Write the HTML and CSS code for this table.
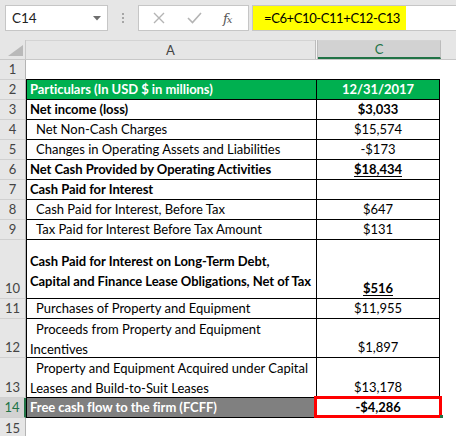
FILE: index.html
```html
<!DOCTYPE html>
<html>
<head>
<meta charset="utf-8">
<link rel="stylesheet" href="styles.css">
</head>
<body>
<div class="app">
  <div class="fbar">
    <div class="namebox">
      <span class="nb-text">C14</span>
      <svg class="caret" width="8" height="5" viewBox="0 0 8 5"><path d="M0 0 H8 L4 4.5 Z" fill="#6e6e6e"/></svg>
    </div>
    <div class="grip"><i></i><i></i><i></i></div>
    <div class="fxbox">
      <svg class="ico" width="12" height="12" viewBox="0 0 12 12"><path d="M1 1 L11 11 M11 1 L1 11" stroke="#b4b4b4" stroke-width="1.4" fill="none"/></svg>
      <svg class="ico" width="15" height="12" viewBox="0 0 15 12"><path d="M1 6 L5.5 10.5 L14 1" stroke="#b4b4b4" stroke-width="1.6" fill="none"/></svg>
      <span class="fx"><span class="fx-f">f</span><span class="fx-x">x</span></span>
    </div>
    <div class="formula"><span class="hl">=C6+C10-C11+C12-C13</span></div>
  </div>

  <div class="colhead">
    <div class="corner"><svg width="15" height="11" viewBox="0 0 15 11"><path d="M15 0 V11 H0 Z" fill="#b9b9b9"/></svg></div>
    <div class="ch ch-a">A</div>
    <div class="ch-b"></div>
    <div class="ch ch-c">C</div>
    <div class="ch-rest"></div>
  </div>

  <div class="sheet">
    <div class="rh r1">1</div><div class="c r1 blank top"></div><div class="c r1 blank top"></div><div class="c r1 blank"></div>

    <div class="rh">2</div><div class="c a green bold">Particulars (In USD $ in millions)</div><div class="c v green bold">12/31/2017</div><div class="c blank"></div>

    <div class="rh">3</div><div class="c a bold">Net income (loss)</div><div class="c v bold">$3,033</div><div class="c blank"></div>

    <div class="rh">4</div><div class="c a ind">Net Non-Cash Charges</div><div class="c v">$15,574</div><div class="c blank"></div>

    <div class="rh">5</div><div class="c a ind">Changes in Operating Assets and Liabilities</div><div class="c v">-$173</div><div class="c blank"></div>

    <div class="rh">6</div><div class="c a bold">Net Cash Provided by Operating Activities</div><div class="c v bold"><u>$18,434</u></div><div class="c blank"></div>

    <div class="rh">7</div><div class="c a bold">Cash Paid for Interest</div><div class="c v"></div><div class="c blank"></div>

    <div class="rh">8</div><div class="c a ind">Cash Paid for Interest, Before Tax</div><div class="c v">$647</div><div class="c blank"></div>

    <div class="rh">9</div><div class="c a ind">Tax Paid for Interest Before Tax Amount</div><div class="c v">$131</div><div class="c blank"></div>

    <div class="rh r10">10</div><div class="c a bold mid r10">Cash Paid for Interest on Long-Term Debt,<br>Capital and Finance Lease Obligations, Net of Tax</div><div class="c v bold r10"><u>$516</u></div><div class="c blank r10"></div>

    <div class="rh">11</div><div class="c a ind">Purchases of Property and Equipment</div><div class="c v">$11,955</div><div class="c blank"></div>

    <div class="rh r12">12</div><div class="c a ind1 r12">Proceeds from Property and Equipment<br>Incentives</div><div class="c v r12">$1,897</div><div class="c blank r12"></div>

    <div class="rh r13">13</div><div class="c a ind1 r13">Property and Equipment Acquired under Capital<br>Leases and Build-to-Suit Leases</div><div class="c v r13">$13,178</div><div class="c blank r13"></div>

    <div class="rh sel">14</div><div class="c a grey bold">Free cash flow to the firm (FCFF)</div><div class="c v bold active">-$4,286<span class="redbox"></span><span class="handle"></span></div><div class="c blank"></div>

    <div class="rh last">15</div><div class="c blank last"></div><div class="c blank last"></div><div class="c blank last"></div>
  </div>
</div>
</body>
</html>
```

FILE: styles.css
```css
* { box-sizing: border-box; }
html, body { margin: 0; padding: 0; }
body {
  width: 456px;
  height: 436px;
  overflow: hidden;
  background: #ffffff;
  font-family: "Lato", "Open Sans", sans-serif;
  color: #000;
}
.app { width: 456px; height: 436px; overflow: hidden; }

/* formula bar */
.fbar {
  height: 40px;
  background: #e6e6e6;
  display: flex;
  align-items: flex-start;
  padding: 5px 0 0 5px;
}
.namebox {
  width: 103px;
  height: 26px;
  background: #fff;
  border: 1px solid #c6c6c6;
  display: flex;
  align-items: center;
  justify-content: space-between;
  padding: 0 6px 0 6px;
  font-size: 13.5px;
  color: #222;
}
.grip {
  width: 30px;
  height: 26px;
  display: flex;
  flex-direction: column;
  align-items: center;
  justify-content: center;
  gap: 2px;
}
.grip i { display: block; width: 2px; height: 2px; background: #a6a6a6; }
.fxbox {
  width: 111px;
  height: 26px;
  background: #fff;
  border: 1px solid #c6c6c6;
  display: flex;
  align-items: center;
  padding-left: 14px;
  gap: 22px;
}
.fx {
  font-family: "DejaVu Serif", "Liberation Serif", serif;
  font-style: italic;
  font-size: 13px;
  color: #555;
  margin-left: -1px;
  letter-spacing: -1px;
}
.fx-x { font-size: 10px; }
.formula {
  margin-left: 3px;
  flex: 1;
  height: 26px;
  background: #fff;
  border: 1px solid #c6c6c6;
  border-right: none;
  padding: 0;
  white-space: nowrap;
  overflow: hidden;
}
.hl {
  display: inline-block;
  height: 24px;
  width: 153px;
  background: #ffff00;
  font-size: 13px;
  line-height: 24px;
  padding-left: 11px;
  color: #000;
  white-space: nowrap;
  letter-spacing: -0.4px;
}

/* column headers */
.colhead {
  display: flex;
  height: 20px;
  background: #e6e6e6;
  border-bottom: 1px solid #c8c8c8;
  font-size: 13px;
  color: #444;
}
.corner {
  width: 26px;
  display: flex;
  align-items: flex-end;
  justify-content: flex-end;
  padding: 0 2px 3px 0;
  border-right: 1px solid #c8c8c8;
}
.ch {
  display: flex;
  align-items: center;
  justify-content: center;
  border-top: 1px solid #d4d4d4;
}
.ch-a { width: 289px; }
.ch-b { width: 3px; border-left: 1px solid #bcbcbc; border-right: 1px solid #bcbcbc; background: #f4f4f4; }
.ch-c { width: 123px; background: #d2d2d2; color: #217346; border-bottom: 2px solid #217346; border-right: 1px solid #bcbcbc; }
.ch-rest { flex: 1; }

/* sheet */
.sheet {
  display: grid;
  grid-template-columns: 26px 291px 123px 16px;
  grid-template-rows: 20px repeat(8, 20px) 59px 20px 39px 40px 20px 20px;
  font-size: 13px;
}
.rh {
  background: #e6e6e6;
  color: #444;
  border-right: 1px solid #b4b4b4;
  border-bottom: 1px solid #d0d0d0;
  display: flex;
  align-items: flex-end;
  justify-content: center;
  padding-bottom: 2px;
  font-size: 13px;
  line-height: 16px;
}
.rh.sel { background: #d2d2d2; color: #217346; border-right: 2px solid #217346; }
.rh.last { border-bottom: none; }
.c {
  border-right: 1px solid #000;
  border-bottom: 1px solid #000;
  display: flex;
  align-items: flex-end;
  padding-bottom: 0;
  line-height: 19px;
  white-space: nowrap;
  position: relative;
}
.c.bold { letter-spacing: -0.05px; }
.c.a { padding-left: 3px; border-left: 1px solid #000; }
.c.ind { padding-left: 9px; }
.c.ind1 { display: block; text-indent: 6px; padding-left: 3px; line-height: 20px; padding-top: 0; }
.c.v { justify-content: center; }
.c.blank { border: none; }
.c.r1.top { border-bottom: 1px solid #000; }
.c.mid { display: block; padding-top: 11px; line-height: 20px; }
.bold { font-weight: 700; }
.green { background: #00b050; color: #fff; }
.grey { background: #808080; color: #fff; }
u { text-decoration-thickness: 1px; text-underline-offset: 2px; }

.redbox {
  position: absolute;
  left: -3px;
  top: -2px;
  right: -3px;
  bottom: -1px;
  border: 3px solid #ff0000;
}
.handle {
  position: absolute;
  right: -4px;
  bottom: -1px;
  width: 3px;
  height: 3px;
  background: #217346;
}
```
